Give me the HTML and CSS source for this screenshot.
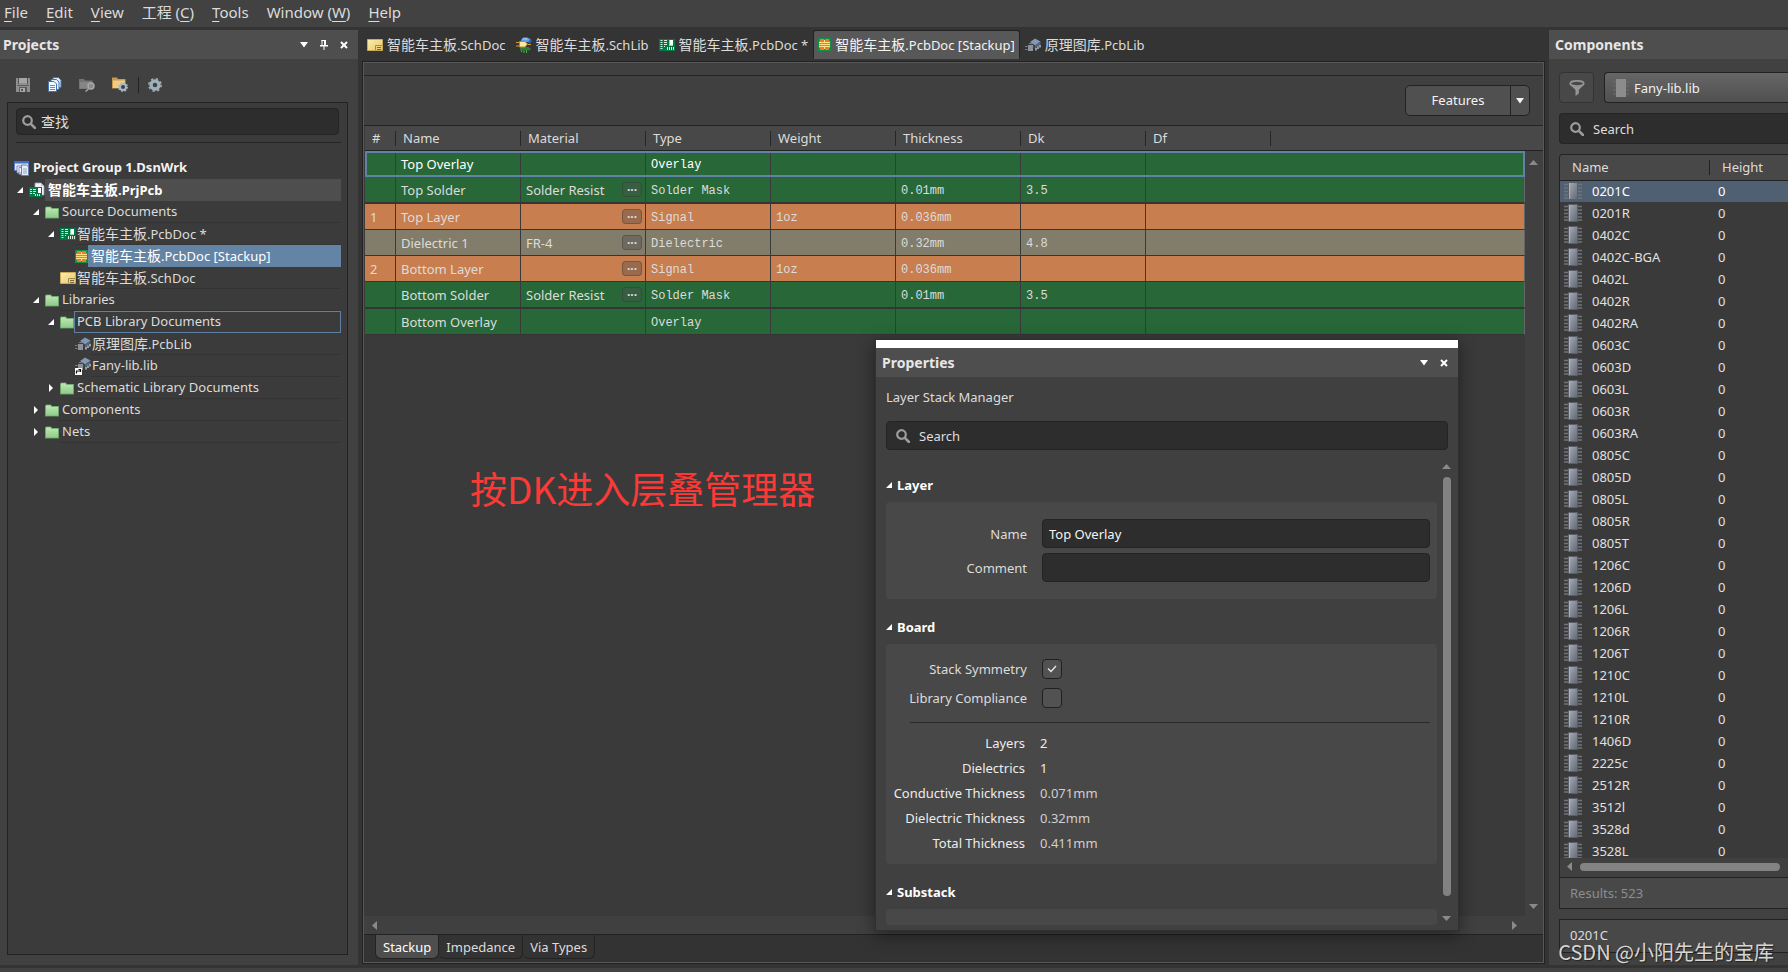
FILE: index.html
```html
<!DOCTYPE html>
<html lang="zh-CN">
<head>
<meta charset="utf-8">
<title>Layer Stack Manager</title>
<link rel="stylesheet" href="styles.css">
</head>
<body>
<svg class="sprite" aria-hidden="true">
  <defs>
    <linearGradient id="g-chip" x1="0" y1="0" x2="1" y2="1"><stop offset="0" stop-color="#a9aeb8"/><stop offset="1" stop-color="#5f6672"/></linearGradient>
    <linearGradient id="g-folder" x1="0" y1="0" x2="0" y2="1"><stop offset="0" stop-color="#bfe8b8"/><stop offset="1" stop-color="#8fcb86"/></linearGradient>
    <linearGradient id="g-sch" x1="0" y1="0" x2="1" y2="1"><stop offset="0" stop-color="#faeeb0"/><stop offset="1" stop-color="#e9c766"/></linearGradient>
  </defs>
  <symbol id="folder" viewBox="0 0 14 13"><path d="M0 1.500 1 .500h5l1 1.500h7v10.500H0z" fill="#5d9a5c"/><path d="M.8 2 1.500 1.200h4L6.500 2.700h6.700v9.100H.8z" fill="url(#g-folder)"/></symbol>
  <symbol id="sch" viewBox="0 0 16 12"><path d="M.5.500h15v11H.5z" fill="url(#g-sch)" stroke="#c9a95a"/><path d="M8.500 11V6.500H15" fill="none" stroke="#a08a4c"/><path d="M10 8.500h4M10 10.500h4" fill="none" stroke="#7b6a38"/></symbol>
  <symbol id="pcb" viewBox="0 0 16 12"><path d="M0 0h16v12H0z" fill="#007a45"/><path d="M1.500 1.500h2M1.500 3.500h2M1.500 5.500h2M1.500 7.500h2M1.500 9.500h2M5 1.500h3M5 3.500h3M5 5.500h3M5 7.500h1M8.500 8v3M10.500 8v3M12.500 8v3M14.500 8v3" stroke="#d8efe0"/><path d="M10 1h4v6h-4z" fill="#8fd0ac"/><path d="M11 1h3v5h-3z" fill="#fff"/></symbol>
  <symbol id="stack" viewBox="0 0 13 13"><path d="M0 0h13v13H0z" fill="#0f8f49"/><path d="M1 3h11v7H1z" fill="#f47a28"/><path d="M2 1.500h4M7 1.500h4M2 11.500h4M7 11.500h4M2 2.500h9M2 10.500h9" stroke="#f47a28"/><path d="M1 4.500h11M1 6.500h11M1 8.500h11" stroke="#ffe08a"/><path d="M6.500 2v3M6.500 8v3" stroke="#ffe08a"/></symbol>
  <symbol id="project" viewBox="0 0 16 16"><path d="M6 1h6l3 3v9H6z" fill="#eef2fa" stroke="#9aa7c4" stroke-width=".8"/><path d="M12 1v3h3z" fill="#b8c4e0"/><path d="M0 5h13v10H0z" fill="#007a45"/><path d="M1 7.500h2M1 9.500h2M1 11.500h2M4 7.500h3M4 9.500h3M4 11.500h2M6.500 12v2M8.500 12v2M10.500 12v2" stroke="#d8efe0"/><path d="M9 6h3v5H9z" fill="#fff"/></symbol>
  <symbol id="group" viewBox="0 0 16 16"><path d="M.5 1.500h14v9H.5z" fill="#dfe7f7" stroke="#5e7fca"/><path d="M0 1h15v2.500H0z" fill="#3f6fd6"/><path d="M3 6h5v7H3zM5 7.500h6v7H5z" fill="#f4f7fd" stroke="#6a7fa8" stroke-width=".8"/><path d="M7.500 5h5l2 2v8.500h-7z" fill="#e9effa" stroke="#6a7fa8"/><path d="M9 9h4M9 11h4M9 13h4" stroke="#8ea2c8"/></symbol>
  <symbol id="pcblib" viewBox="0 0 16 14"><path d="m5 4 5-3.500 5.500 3-5.500 4z" fill="#8298b4"/><path d="m5 4 5 3.500v3L6.500 9z" fill="#3b4654"/><path d="m10 7.500 5.500-4v3l-5.500 4z" fill="#56657a"/><path d="M11 10v2.500M13 8.500V11M15 7v2.500" stroke="#d9dee6" stroke-width="1.200"/><path d="M3 7h5v6H3z" fill="#8c9299"/><path d="M0 8.500h2.500M0 11.500h2.500M4 5.500h4" stroke="#777d84"/></symbol>
  <symbol id="schlib" viewBox="0 0 16 16"><path d="m5 3 2-2.500h4L14.500 2 13 5H5z" fill="#5b9bea"/><path d="m7 1.500 4-.5 1 1.500H6z" fill="#a9cdf8"/><path d="m12 5 3.500-3v3L13 7z" fill="#2c5fae"/><path d="M4 10h9v3.500H4z" fill="#2e7d32"/><path d="M5.500 13.500V15M8 13.500V16M10.500 13.500V16M13 12h1.500" stroke="#57b35a"/><path d="M3.500 4.500h5.500l2.500 2.500L9 10H3.500z" fill="#f7e9a8" stroke="#b58e2c"/><path d="M0 5.500h3M0 9h3M12 7.500h3" stroke="#d59b2c"/></symbol>
  <symbol id="chip" viewBox="0 0 18 18"><path d="M0 2.500h4M0 6h4M0 9.500h4M0 13h4M0 16h4M14 2.500h4M14 6h4M14 9.500h4M14 13h4M14 16h4" stroke="#70747a" stroke-width="1.400"/><path d="M4.500.500h9v17h-9z" fill="url(#g-chip)" stroke="#5a5f68"/><path d="M5.500 1v16" stroke="#b4b8c0" stroke-width=".8"/></symbol>
  <symbol id="lens" viewBox="0 0 14 14"><circle cx="5.500" cy="5.500" r="4.300" fill="none" stroke="#9c9c9c" stroke-width="2.200"/><path d="m8.800 8.800 4.200 4.200" stroke="#9c9c9c" stroke-width="2.600" stroke-linecap="round"/></symbol>
  <symbol id="save" viewBox="0 0 14 14"><path d="M0 0h14v14H0z" fill="#8f8f8f"/><path d="M2 0h1v6H2zM11 0h1v6h-1z" fill="#555"/><path d="M3 0h8v5H3z" fill="#a5a5a5"/><path d="M1 7.500h12" stroke="#5a5a5a"/><path d="M3 9h8v5H3z" fill="#5a5a5a"/><path d="M4 10h5v4H4z" fill="#aaa"/><path d="M5 11h2v2H5z" fill="#555"/></symbol>
  <symbol id="pages" viewBox="0 0 14 15"><path d="M5 .500h5.500l2.500 2.500v7.500H5z" fill="#dce9fa" stroke="#3f74b9"/><path d="M3 2.500h5.500l2.500 2.500v7.500H3z" fill="#e9f1fc" stroke="#3f74b9"/><path d="M.5 4.500H6l2.500 2.500v7.500h-8z" fill="#f5f9ff" stroke="#3f74b9"/><path d="M2 8.500h5M2 10.500h5M2 12.500h5" stroke="#5b8dcd"/></symbol>
  <symbol id="find" viewBox="0 0 16 14"><path d="M0 1h5l1 1.500h7.500V11H0z" fill="#747474"/><path d="M1 4h12v6.500H1z" fill="#858585"/><circle cx="12" cy="8" r="3" fill="#8a8a8a" stroke="#a8a8a8" stroke-width="1.400"/><path d="m10 10.500-3.500 3" stroke="#a0a0a0" stroke-width="1.600"/></symbol>
  <symbol id="gearfolder" viewBox="0 0 16 15"><path d="M0 .500h5L6 2h7.500v9.500H0z" fill="#c99a4c"/><path d="M1 3.500h12V11H1z" fill="#f1cd84"/><circle cx="11" cy="10" r="3" fill="#414141" stroke="#a9bac6" stroke-width="2"/><circle cx="11" cy="10" r="4.400" fill="none" stroke="#a9bac6" stroke-width="1.200" stroke-dasharray="1.700 1.755"/></symbol>
  <symbol id="gear" viewBox="0 0 14 14"><circle cx="7" cy="7" r="4" fill="none" stroke="#9fb0ba" stroke-width="3.400"/><circle cx="7" cy="7" r="6.200" fill="none" stroke="#9fb0ba" stroke-width="1.500" stroke-dasharray="2.400 2.470"/></symbol>
  <symbol id="caret" viewBox="0 0 8 6"><path d="M0 0h8L4 5.500z" fill="currentColor"/></symbol>
  <symbol id="pin" viewBox="0 0 8 10"><path d="M2 0v5M1.500.500H6" stroke="currentColor"/><path d="M4 0h2v5.500H4zM0 5h8v1.500H0zM3.500 6h1v4h-1z" fill="currentColor"/></symbol>
  <symbol id="cross" viewBox="0 0 8 8"><path d="m1 1 6 6M7 1 1 7" stroke="currentColor" stroke-width="2"/></symbol>
  <symbol id="open" viewBox="0 0 6 6"><path d="M6 0v6H0z" fill="#fff"/></symbol>
  <symbol id="closed" viewBox="0 0 6 8"><path d="M1 0v8l4-4z" fill="#fff"/></symbol>
  <symbol id="funnel" viewBox="0 0 16 16"><ellipse cx="8" cy="3.500" rx="6.800" ry="2.600" fill="none" stroke="#969696" stroke-width="1.600"/><path d="M1 4.500c2 2.500 12 2.500 14 0L9.800 10v3.500L6.500 16v-6z" fill="#969696"/></symbol>
  <symbol id="tick" viewBox="0 0 10 8"><path d="m1 3.500 3 3L9 1" fill="none" stroke="#e8e8e8" stroke-width="1.300"/></symbol>
  <symbol id="up" viewBox="0 0 9 5"><path d="M0 5 4.500 0 9 5z" fill="#8a8a8a"/></symbol>
  <symbol id="down" viewBox="0 0 9 5"><path d="M0 0h9L4.500 5z" fill="#8a8a8a"/></symbol>
  <symbol id="left" viewBox="0 0 5 9"><path d="M5 0v9L0 4.500z" fill="#8a8a8a"/></symbol>
  <symbol id="right" viewBox="0 0 5 9"><path d="M0 0v9l5-4.500z" fill="#8a8a8a"/></symbol>
</svg>

<div class="app">
  <nav class="menubar">
    <button><u>F</u>ile</button><button><u>E</u>dit</button><button><u>V</u>iew</button><button>工程 (<u>C</u>)</button><button><u>T</u>ools</button><button>Window (<u>W</u>)</button><button><u>H</u>elp</button>
  </nav>

  <div class="workspace">
    <aside class="panel projects">
      <header class="panel-head">
        <h2>Projects</h2>
        <button aria-label="Menu"><svg width="8" height="6"><use href="#caret"/></svg></button>
        <button aria-label="Pin"><svg width="8" height="10"><use href="#pin"/></svg></button>
        <button aria-label="Close"><svg width="8" height="8"><use href="#cross"/></svg></button>
      </header>
      <div class="tools">
        <button aria-label="Save"><svg width="14" height="14"><use href="#save"/></svg></button>
        <button aria-label="Compile"><svg width="14" height="15"><use href="#pages"/></svg></button>
        <button aria-label="Explore"><svg width="16" height="14"><use href="#find"/></svg></button>
        <button aria-label="Project options"><svg width="16" height="15"><use href="#gearfolder"/></svg></button>
        <span class="tools-rule"></span>
        <button aria-label="Settings"><svg width="14" height="14"><use href="#gear"/></svg></button>
      </div>
      <div class="tree-box">
        <label class="search tree-search"><svg width="14" height="14"><use href="#lens"/></svg><input class="cjk" type="text" placeholder="查找" aria-label="查找"></label>
        <ul class="tree">
          <li class="l0 strong"><svg width="16" height="16"><use href="#group"/></svg><span class="node">Project Group 1.DsnWrk</span></li>
          <li class="l1 strong"><svg class="tw" width="6" height="6"><use href="#open"/></svg><svg width="16" height="16"><use href="#project"/></svg><span class="node current"><span class="cjk">智能车主板</span>.PrjPcb</span></li>
          <li class="l2"><svg class="tw" width="6" height="6"><use href="#open"/></svg><svg width="14" height="13"><use href="#folder"/></svg><span class="node">Source Documents</span></li>
          <li class="l3"><svg class="tw" width="6" height="6"><use href="#open"/></svg><svg width="16" height="12"><use href="#pcb"/></svg><span class="node tight"><span class="cjk">智能车主板</span>.PcbDoc *</span></li>
          <li class="l4"><span class="tw"></span><svg width="13" height="13"><use href="#stack"/></svg><span class="node selected"><span class="cjk">智能车主板</span>.PcbDoc [Stackup]</span></li>
          <li class="l3"><span class="tw"></span><svg width="16" height="12"><use href="#sch"/></svg><span class="node tight"><span class="cjk">智能车主板</span>.SchDoc</span></li>
          <li class="l2"><svg class="tw" width="6" height="6"><use href="#open"/></svg><svg width="14" height="13"><use href="#folder"/></svg><span class="node">Libraries</span></li>
          <li class="l3"><svg class="tw" width="6" height="6"><use href="#open"/></svg><svg width="14" height="13"><use href="#folder"/></svg><span class="node focused">PCB Library Documents</span></li>
          <li class="l4"><span class="tw"></span><svg width="16" height="14"><use href="#pcblib"/></svg><span class="node tight"><span class="cjk">原理图库</span>.PcbLib</span></li>
          <li class="l4"><span class="tw"></span><svg width="16" height="18" viewBox="0 0 16 18"><use href="#pcblib" width="16" height="14"/><path d="M0 11h7v7H0z" fill="#fff"/><path d="M1.500 16.500V14H5M3.500 12.500H5.500V15" fill="none" stroke="#111" stroke-width="1.200"/></svg><span class="node tight">Fany-lib.lib</span></li>
          <li class="l3"><svg class="tw" width="6" height="8"><use href="#closed"/></svg><svg width="14" height="13"><use href="#folder"/></svg><span class="node">Schematic Library Documents</span></li>
          <li class="l2"><svg class="tw" width="6" height="8"><use href="#closed"/></svg><svg width="14" height="13"><use href="#folder"/></svg><span class="node">Components</span></li>
          <li class="l2"><svg class="tw" width="6" height="8"><use href="#closed"/></svg><svg width="14" height="13"><use href="#folder"/></svg><span class="node">Nets</span></li>
        </ul>
      </div>
    </aside>

    <main class="editor">
      <div class="doc-tabs">
        <button><svg width="16" height="12"><use href="#sch"/></svg><span><span class="cjk">智能车主板</span>.SchDoc</span></button>
        <button><svg width="16" height="16"><use href="#schlib"/></svg><span><span class="cjk">智能车主板</span>.SchLib</span></button>
        <button><svg width="16" height="12"><use href="#pcb"/></svg><span><span class="cjk">智能车主板</span>.PcbDoc *</span></button>
        <button class="active"><svg width="13" height="13"><use href="#stack"/></svg><span><span class="cjk">智能车主板</span>.PcbDoc [Stackup]</span></button>
        <button><svg width="16" height="14"><use href="#pcblib"/></svg><span><span class="cjk">原理图库</span>.PcbLib</span></button>
      </div>
      <section class="doc">
        <div class="doc-strip"></div>
        <div class="doc-bar"><div class="split"><button>Features</button><button aria-label="More features"><svg width="10" height="6"><use href="#caret"/></svg></button></div></div>
        <div class="sheet">
          <div class="sheet-body">
            <table class="stack">
              <colgroup><col class="c-num"><col class="c"><col class="c"><col class="c"><col class="c"><col class="c"><col class="c"><col class="c"><col></colgroup>
              <thead><tr><th><span>#</span></th><th><span>Name</span></th><th><span>Material</span></th><th><span>Type</span></th><th><span>Weight</span></th><th><span>Thickness</span></th><th><span>Dk</span></th><th><span>Df</span></th><th></th></tr></thead>
              <tbody>
                <tr class="green picked"><td></td><td>Top Overlay</td><td></td><td class="m">Overlay</td><td></td><td></td><td></td><td colspan="2"></td></tr>
                <tr class="green gap"><td></td><td>Top Solder</td><td><div class="mat">Solder Resist<button>···</button></div></td><td class="m">Solder Mask</td><td></td><td class="m">0.01mm</td><td class="m">3.5</td><td colspan="2"></td></tr>
                <tr class="copper"><td>1</td><td>Top Layer</td><td><div class="mat"><button>···</button></div></td><td class="m">Signal</td><td class="m">1oz</td><td class="m">0.036mm</td><td></td><td colspan="2"></td></tr>
                <tr class="core"><td></td><td>Dielectric 1</td><td><div class="mat">FR-4<button>···</button></div></td><td class="m">Dielectric</td><td></td><td class="m">0.32mm</td><td class="m">4.8</td><td colspan="2"></td></tr>
                <tr class="copper"><td>2</td><td>Bottom Layer</td><td><div class="mat"><button>···</button></div></td><td class="m">Signal</td><td class="m">1oz</td><td class="m">0.036mm</td><td></td><td colspan="2"></td></tr>
                <tr class="green gap"><td></td><td>Bottom Solder</td><td><div class="mat">Solder Resist<button>···</button></div></td><td class="m">Solder Mask</td><td></td><td class="m">0.01mm</td><td class="m">3.5</td><td colspan="2"></td></tr>
                <tr class="green"><td></td><td>Bottom Overlay</td><td></td><td class="m">Overlay</td><td></td><td></td><td></td><td colspan="2"></td></tr>
              </tbody>
            </table>
          </div>
          <div class="vbar"><svg width="9" height="5"><use href="#up"/></svg><svg width="9" height="5"><use href="#down"/></svg></div>
          <div class="hbar"><svg width="5" height="9"><use href="#left"/></svg><svg width="5" height="9"><use href="#right"/></svg></div>
        </div>
        <div class="view-tabs"><button class="active">Stackup</button><button>Impedance</button><button>Via Types</button></div>
      </section>
      <p class="note">按DK进入层叠管理器</p>
    </main>

    <aside class="panel components">
      <header class="panel-head"><h2>Components</h2></header>
      <div class="lib-row">
        <button class="filter" aria-label="Filter"><svg width="16" height="16"><use href="#funnel"/></svg></button>
        <div class="lib"><svg width="16" height="18" viewBox="0 0 16 18"><path d="M0 3h16M0 7h16M0 11h16M0 15h16" stroke="#6e6e6e"/><path d="M3 0h10v18H3z" fill="#8c8c8c"/></svg><select aria-label="Library"><option>Fany-lib.lib</option></select></div>
      </div>
      <label class="search comp-search"><svg width="14" height="14"><use href="#lens"/></svg><input type="text" placeholder="Search" aria-label="Search components"></label>
      <div class="comp-box">
        <div class="comp-list">
          <table>
            <thead><tr><th><span>Name</span></th><th>Height</th></tr></thead>
            <tbody>
              <tr class="on"><td><svg width="18" height="18"><use href="#chip"/></svg>0201C</td><td>0</td></tr>
              <tr><td><svg width="18" height="18"><use href="#chip"/></svg>0201R</td><td>0</td></tr>
              <tr><td><svg width="18" height="18"><use href="#chip"/></svg>0402C</td><td>0</td></tr>
              <tr><td><svg width="18" height="18"><use href="#chip"/></svg>0402C-BGA</td><td>0</td></tr>
              <tr><td><svg width="18" height="18"><use href="#chip"/></svg>0402L</td><td>0</td></tr>
              <tr><td><svg width="18" height="18"><use href="#chip"/></svg>0402R</td><td>0</td></tr>
              <tr><td><svg width="18" height="18"><use href="#chip"/></svg>0402RA</td><td>0</td></tr>
              <tr><td><svg width="18" height="18"><use href="#chip"/></svg>0603C</td><td>0</td></tr>
              <tr><td><svg width="18" height="18"><use href="#chip"/></svg>0603D</td><td>0</td></tr>
              <tr><td><svg width="18" height="18"><use href="#chip"/></svg>0603L</td><td>0</td></tr>
              <tr><td><svg width="18" height="18"><use href="#chip"/></svg>0603R</td><td>0</td></tr>
              <tr><td><svg width="18" height="18"><use href="#chip"/></svg>0603RA</td><td>0</td></tr>
              <tr><td><svg width="18" height="18"><use href="#chip"/></svg>0805C</td><td>0</td></tr>
              <tr><td><svg width="18" height="18"><use href="#chip"/></svg>0805D</td><td>0</td></tr>
              <tr><td><svg width="18" height="18"><use href="#chip"/></svg>0805L</td><td>0</td></tr>
              <tr><td><svg width="18" height="18"><use href="#chip"/></svg>0805R</td><td>0</td></tr>
              <tr><td><svg width="18" height="18"><use href="#chip"/></svg>0805T</td><td>0</td></tr>
              <tr><td><svg width="18" height="18"><use href="#chip"/></svg>1206C</td><td>0</td></tr>
              <tr><td><svg width="18" height="18"><use href="#chip"/></svg>1206D</td><td>0</td></tr>
              <tr><td><svg width="18" height="18"><use href="#chip"/></svg>1206L</td><td>0</td></tr>
              <tr><td><svg width="18" height="18"><use href="#chip"/></svg>1206R</td><td>0</td></tr>
              <tr><td><svg width="18" height="18"><use href="#chip"/></svg>1206T</td><td>0</td></tr>
              <tr><td><svg width="18" height="18"><use href="#chip"/></svg>1210C</td><td>0</td></tr>
              <tr><td><svg width="18" height="18"><use href="#chip"/></svg>1210L</td><td>0</td></tr>
              <tr><td><svg width="18" height="18"><use href="#chip"/></svg>1210R</td><td>0</td></tr>
              <tr><td><svg width="18" height="18"><use href="#chip"/></svg>1406D</td><td>0</td></tr>
              <tr><td><svg width="18" height="18"><use href="#chip"/></svg>2225c</td><td>0</td></tr>
              <tr><td><svg width="18" height="18"><use href="#chip"/></svg>2512R</td><td>0</td></tr>
              <tr><td><svg width="18" height="18"><use href="#chip"/></svg>3512l</td><td>0</td></tr>
              <tr><td><svg width="18" height="18"><use href="#chip"/></svg>3528d</td><td>0</td></tr>
              <tr><td><svg width="18" height="18"><use href="#chip"/></svg>3528L</td><td>0</td></tr>
            </tbody>
          </table>
        </div>
        <div class="comp-scroll"><svg width="5" height="9"><use href="#left"/></svg><span></span></div>
        <div class="results">Results: 523</div>
      </div>
      <div class="detail">0201C</div>
    </aside>
  </div>
  <footer class="status"></footer>
</div>

<section class="dialog">
  <header class="panel-head">
    <h2>Properties</h2>
    <button aria-label="Menu"><svg width="8" height="6"><use href="#caret"/></svg></button>
    <button aria-label="Close"><svg width="8" height="8"><use href="#cross"/></svg></button>
  </header>
  <p class="scope">Layer Stack Manager</p>
  <label class="search dialog-search"><svg width="14" height="14"><use href="#lens"/></svg><input type="text" placeholder="Search" aria-label="Search properties"></label>
  <div class="dialog-body">
    <div class="groups">
      <h3><svg width="6" height="6"><use href="#open"/></svg>Layer</h3>
      <div class="group layer">
        <label for="f-name">Name</label><input id="f-name" type="text" value="Top Overlay">
        <label for="f-comment">Comment</label><input id="f-comment" type="text">
      </div>
      <h3><svg width="6" height="6"><use href="#open"/></svg>Board</h3>
      <div class="group board">
        <div class="checks">
          <label for="f-sym">Stack Symmetry</label><span class="check"><input id="f-sym" type="checkbox" checked><svg width="10" height="8"><use href="#tick"/></svg></span>
          <label for="f-lib">Library Compliance</label><span class="check"><input id="f-lib" type="checkbox"></span>
        </div>
        <hr>
        <dl>
          <dt>Layers</dt><dd class="plain">2</dd>
          <dt>Dielectrics</dt><dd class="plain">1</dd>
          <dt>Conductive Thickness</dt><dd>0.071mm</dd>
          <dt>Dielectric Thickness</dt><dd>0.32mm</dd>
          <dt>Total Thickness</dt><dd>0.411mm</dd>
        </dl>
      </div>
      <h3><svg width="6" height="6"><use href="#open"/></svg>Substack</h3>
      <div class="group sub"></div>
    </div>
    <div class="dialog-bar"><svg width="9" height="5"><use href="#up"/></svg><span></span><svg width="9" height="5"><use href="#down"/></svg></div>
  </div>
</section>
<p class="watermark">CSDN @小阳先生的宝库</p>
</body>
</html>
```
FILE: styles.css
```css
* { box-sizing: border-box; }
html, body { height: 100%; }
body {
  margin: 0;
  overflow: hidden;
  background: #343434;
  color: #dcdcdc;
  font: 13px/20px "Noto Sans", "Noto Sans CJK SC", sans-serif;
}
button, input, select { font: inherit; color: inherit; }
button { background: none; border: 0; padding: 0; }
svg { display: block; flex: none; }
h2, h3, p, ul, dl, dd { margin: 0; padding: 0; }
ul { list-style: none; }
.sprite { position: absolute; width: 0; height: 0; }
.cjk, .cjk::placeholder { font-size: 14px; }

.app { display: flex; flex-direction: column; height: 100vh; }

.menubar {
  display: flex;
  gap: 18px;
  height: 27px;
  padding-left: 4px;
  background: #424242;
  font-size: 15px;
  line-height: 24px;
}
.menubar button { display: block; height: 24px; white-space: nowrap; }
.menubar u { text-underline-offset: 3px; }

.workspace {
  flex: 1;
  min-height: 0;
  display: grid;
  grid-template-columns: 358px minmax(0, 1fr) 239px;
  padding: 3px 0;
}
.status { height: 4px; background: #424242; }

/* side panels */
.panel { display: flex; flex-direction: column; min-height: 0; background: #414141; overflow: hidden; }
.panel-head {
  display: flex;
  align-items: center;
  gap: 12px;
  flex: none;
  height: 29px;
  padding: 0 10px 0 3px;
  background: #4e4e4e;
  color: #fff;
}
.panel-head h2 { flex: 1; font-size: 14px; line-height: 20px; font-weight: 700; color: #e6e6e6; }
.panel-head button { color: #fff; }

.tools { display: flex; align-items: center; gap: 18px; height: 43px; padding: 8px 0 0 16px; }
.tools button:nth-child(n + 3) { margin-left: -1px; }
.tools-rule { width: 1px; height: 16px; margin: 0 -8px; background: #222; }

.tree-box { flex: 1; margin: 0 10px 10px 7px; padding: 5px 6px; border: 1px solid #222; background: #3b3b3b; }
.search {
  display: flex;
  align-items: center;
  gap: 8px;
  background: #2d2d2d;
  border: 1px solid #242424;
  border-radius: 4px;
}
.search input { flex: 1; min-width: 0; border: 0; padding: 0; background: none; outline: 0; }
.search input::placeholder { color: #dedede; opacity: 1; }
.tree-search { height: 27px; margin: 0 2px; padding-left: 5px; gap: 5px; }
.tree { margin: 7px 0 0 2px; padding-top: 14px; border-top: 1px solid #252525; }
.tree li { display: flex; align-items: center; height: 22px; }
.tree .tw { width: 6px; margin-right: 6px; flex: none; }
.tree .node { flex: 1; height: 22px; padding-left: 3px; line-height: 21px; border-bottom: 1px solid #343434; white-space: nowrap; }
.tree .l0 { margin-left: -2px; }
.tree .l1 { padding-left: 1px; }
.tree .l2 { padding-left: 17px; }
.tree .l3 { padding-left: 32px; }
.tree .l4 { padding-left: 47px; }
.tree .tight { padding-left: 1px; }
.tree .strong { font-weight: 700; color: #f2f2f2; }
.tree .current { background: #4e4e4e; color: #fff; border-color: #4e4e4e; }
.tree .selected { background: #6384a5; color: #fff; border-color: #6384a5; }
.tree .focused { padding-left: 2px; border: 1px solid #5d80a3; line-height: 19px; }
.tree .l0 .node { border: 0; }

/* editor */
.editor { display: flex; flex-direction: column; padding: 0 4px; min-height: 0; position: relative; }
.doc-tabs { display: flex; height: 31px; padding-bottom: 2px; }
.doc-tabs button {
  display: flex;
  align-items: center;
  gap: 4px;
  padding: 0 4px;
  border: 1px solid transparent;
  border-radius: 3px 3px 0 0;
  white-space: nowrap;
}
.doc-tabs .active { background: #585858; border-color: #222 #222 #585858; color: #f4f4f4; }
.doc { flex: 1; min-height: 0; display: flex; flex-direction: column; border: 1px solid #222; box-shadow: inset 0 0 0 1px #585858; padding: 1px; margin-bottom: 1px; }
.doc-strip { height: 13px; background: #404040; border-bottom: 1px solid #242424; }
.doc-bar { display: flex; justify-content: flex-end; height: 50px; padding: 9px 13px 0; background: #404040; border-bottom: 1px solid #242424; }
.split { display: flex; height: 31px; border: 1px solid #222; border-radius: 5px; background: #505050; color: #f4f4f4; }
.split button:first-child { width: 104px; padding-bottom: 1px; }
.split button:last-child { display: flex; align-items: center; justify-content: center; width: 19px; border-left: 1px solid #222; }
.sheet { flex: 1; min-height: 0; display: grid; grid-template: minmax(0, 1fr) 18px / minmax(0, 1fr) 18px; background: #404040; }
.sheet-body { background: #3a3a3a; overflow: hidden; padding-left: 1px; }
.vbar { display: flex; flex-direction: column; justify-content: space-between; align-items: center; padding: 34px 1px 7px 0; background: linear-gradient(#484848 24px, #222 24px, #222 25px, #404040 25px); }
.hbar { display: flex; justify-content: space-between; align-items: center; padding: 0 8px; }

.stack { width: 100%; table-layout: fixed; border-collapse: separate; border-spacing: 0; }
.c-num { width: 31px; }
.c { width: 125px; }
.stack th, .stack td { padding: 0 0 0 5px; height: 26px; text-align: left; font-weight: 400; line-height: 20px; white-space: nowrap; }
.stack th { height: 25px; padding: 0; background: #484848; border-bottom: 1px solid #222; }
.stack th span { display: block; height: 15px; margin: 2px 0; padding-left: 7px; line-height: 15px; border-right: 1px solid #262626; }
.stack td { border-right: 1px solid #3a3a3a; border-bottom: 1px solid #353535; }
.stack td:last-child { border-right-color: #666; }
.stack .gap td { height: 27px; border-bottom-width: 2px; }
.green td { background: #286838; }
.copper td { background: #c87e4e; }
.core td { background: #827c6a; }
.stack td.m { padding-top: 2px; font-family: "Liberation Mono", monospace; font-size: 12px; }
.picked { outline: 2px solid #5f82a5; outline-offset: -2px; color: #fff; }
.mat { display: flex; align-items: center; height: 20px; }
.mat button { width: 20px; height: 15px; margin: 0 3px 0 auto; border: 1px solid rgba(40, 40, 40, .3); border-radius: 4px; background: rgba(80, 80, 80, .4); font-weight: 700; line-height: 10px; font-size: 12px; }

.view-tabs { display: flex; height: 28px; padding: 0 0 3px 11px; border-top: 1px solid #222; background: #333; }
.view-tabs button { padding: 1px 7px 0; border: 1px solid #232323; border-top: 0; border-left-width: 0; border-radius: 0 0 6px 6px; }
.view-tabs .active { background: #4e4e4e; color: #fff; border-left-width: 1px; }

.note { position: absolute; left: 112px; top: 431px; color: #fb3a37; font: 37px/54px "Noto Sans CJK SC", sans-serif; white-space: nowrap; }

/* components panel */
.components .panel-head { padding-left: 6px; }
.lib-row { display: flex; gap: 10px; padding: 13px 0 10px 10px; }
.filter { display: flex; align-items: center; justify-content: center; flex: none; width: 35px; height: 31px; border: 1px solid #333; border-radius: 4px; background: #484848; }
.lib { flex: 1; display: flex; align-items: center; gap: 5px; padding-left: 8px; border: 1px solid #222; border-right: 0; border-radius: 4px 0 0 4px; background: linear-gradient(#666, #505050); color: #f0f0f0; }
.lib select { flex: 1; min-width: 0; padding: 0; border: 0; background: none; appearance: none; }
.comp-search { flex: none; height: 31px; margin-left: 10px; padding-left: 10px; gap: 9px; border-right: 0; border-radius: 4px 0 0 4px; }
.comp-box { flex: 1; min-height: 0; display: flex; flex-direction: column; margin: 10px 0 10px 10px; border: 1px solid #222; border-right: 0; border-radius: 4px 0 0 0; overflow: hidden; }
.comp-list { flex: 1; min-height: 0; overflow: hidden; background: #3a3a3a; }
.comp-list table { width: 100%; table-layout: fixed; border-collapse: collapse; }
.comp-list th { height: 25px; padding: 0 0 0 12px; background: #484848; border-bottom: 1px solid #222; text-align: left; font-weight: 400; }
.comp-list th:first-child { width: 150px; }
.comp-list th span { display: block; line-height: 15px; border-right: 1px solid #222; }
.comp-list td { height: 22px; padding: 0 0 0 8px; line-height: 20px; color: #e0e0e0; }
.comp-list td:first-child { padding-left: 4px; }
.comp-list td svg { float: left; margin: 1px 10px 0 0; }
.comp-list .on td { background: #4f6072; color: #fff; }
.comp-scroll { display: flex; align-items: center; gap: 8px; height: 19px; padding: 0 8px 2px 7px; background: #404040; }
.comp-scroll span { flex: 1; height: 8px; border-radius: 4px; background: #838383; }
.results { height: 31px; padding-left: 10px; line-height: 30px; border-top: 1px solid #222; background: #484848; color: #8e8e8e; }
.detail { flex: none; height: 34px; margin: 0 0 12px 10px; padding-left: 10px; line-height: 30px; border: 1px solid #222; border-right: 0; background: #484848; }

/* floating properties window */
.dialog {
  position: absolute;
  left: 876px;
  top: 340px;
  width: 582px;
  height: 590px;
  display: flex;
  flex-direction: column;
  background: #404040;
  border-top: 8px solid #fff;
  box-shadow: 0 0 0 1px #303030, 0 4px 16px 2px rgba(0, 0, 0, .4);
}
.dialog .panel-head { padding-left: 6px; }
.scope { padding: 10px 10px 14px; }
.dialog-search { flex: none; height: 29px; margin: 0 10px; padding-left: 9px; gap: 9px; }
.dialog-body { flex: 1; min-height: 0; display: flex; gap: 5px; padding: 13px 7px 5px 10px; }
.groups { flex: 1; display: flex; flex-direction: column; overflow: hidden; }
.groups h3 { display: flex; align-items: center; gap: 5px; margin: 18px 0 7px; font-size: 13px; line-height: 20px; color: #fff; }
.groups h3:first-child { margin-top: 12px; }
.group { border-radius: 4px; background: #484848; }
.layer { display: grid; grid-template-columns: 141px 1fr; gap: 5px 15px; align-items: center; padding: 17px 7px 17px 0; }
.layer label, .checks label, dt { text-align: right; }
.layer input { height: 29px; width: 100%; padding: 0 6px; border: 1px solid #232323; border-radius: 4px; background: #2d2d2d; color: #f4f4f4; }
.board { padding: 15px 7px 11px 0; }
.checks { display: grid; grid-template-columns: 141px 1fr; gap: 9px 15px; }
.check { display: grid; width: 20px; height: 20px; place-items: center; }
.check input, .check svg { grid-area: 1 / 1; }
.check input { appearance: none; width: 20px; height: 20px; margin: 0; border: 1px solid #202020; border-radius: 4px; background: #525252; }
.check svg { z-index: 1; pointer-events: none; }
hr { margin: 14px 0 10px 24px; border: 0; border-top: 1px solid #2a2a2a; }
dl { display: grid; grid-template-columns: 139px 1fr; gap: 5px 15px; }
dt, .plain { color: #ececec; }
dd { color: #cfcfcf; }
.sub { flex: 1; }
.dialog-bar { display: flex; flex-direction: column; align-items: center; gap: 8px; padding: 1px 0 4px; }
.dialog-bar span { width: 8px; flex: 1; margin-bottom: 12px; border-radius: 4px; background: #828282; }

.watermark { position: absolute; right: 14px; bottom: 6px; color: #d6d6d6; font: 20px/28px "Noto Sans CJK SC", sans-serif; text-shadow: 1px 1px 1px #222; white-space: nowrap; }
```
